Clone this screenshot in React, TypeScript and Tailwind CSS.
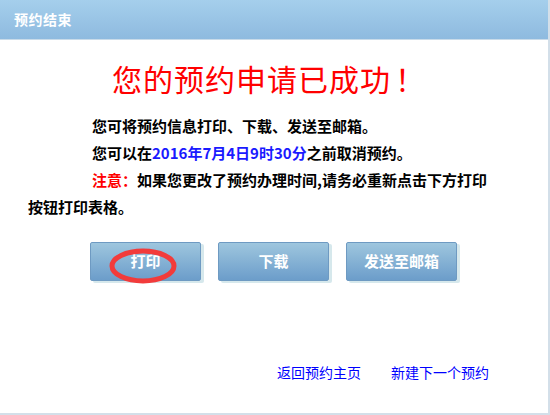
import React from 'react';

const cjk = { fontFamily: '"Noto Sans CJK SC", "Liberation Sans", sans-serif' };

const ActionButton = ({ label, circled }: { label: string; circled?: boolean }) => (
  <div className="relative">
    <button className="w-[111px] h-[39px] rounded-[2px] border border-[#6e9ac2] bg-gradient-to-b from-[#9ec6de] to-[#6c9dca] text-white text-[15px] font-bold shadow-[3px_2px_0_#d6e8ec]">
      {label}
    </button>
    {circled && (
      <svg className="absolute left-[19px] top-[6px] pointer-events-none" width="68" height="36" viewBox="0 0 68 36">
        <ellipse cx="34" cy="18" rx="31" ry="15" fill="none" stroke="#f23b3b" strokeWidth="5" />
      </svg>
    )}
  </div>
);

export default function App() {
  return (
    <div style={cjk} className="w-[550px] h-[415px] bg-white border-r-2 border-b-2 border-[#d3dfe9] flex flex-col">
      {/* Header */}
      <div className="h-10 shrink-0 bg-gradient-to-b from-[#a5cfec] to-[#8ebadf] border-b border-[#c9dbe9] flex items-center pl-[14px]">
        <span className="text-white text-[14px] font-bold tracking-[0.5px]">预约结束</span>
      </div>

      {/* Title */}
      <h1 className="mt-5 pl-[112px] text-[30px] leading-[36px] text-[#ff0000] tracking-[1px] font-normal">
        您的预约申请已成功<span className="ml-[4px]">！</span>
      </h1>

      {/* Messages */}
      <div className="mt-[16px] pl-[60px] text-[15px] leading-[27px] font-bold text-black">
        <p className="indent-[32px]">您可将预约信息打印、下载、发送至邮箱。</p>
        <p className="indent-[32px]">
          您可以在<span className="text-[#1a1aff]">2016年7月4日9时30分</span>之前取消预约。
        </p>
        <p className="indent-[32px]">
          <span className="text-[#ff0000]">注意：</span>如果您更改了预约办理时间,请务必重新点击下方打印
          <br />
          <span className="-ml-[32px]">按钮打印表格。</span>
        </p>
      </div>

      {/* Buttons */}
      <div className="mt-[22px] pl-[90px] flex gap-[17px]">
        <ActionButton label="打印" circled />
        <ActionButton label="下载" />
        <ActionButton label="发送至邮箱" />
      </div>

      {/* Links */}
      <div className="mt-[81px] pl-[277px] flex gap-[30px] text-[14px] text-[#0000ff]">
        <a href="#" className="hover:underline">返回预约主页</a>
        <a href="#" className="hover:underline">新建下一个预约</a>
      </div>
    </div>
  );
}
